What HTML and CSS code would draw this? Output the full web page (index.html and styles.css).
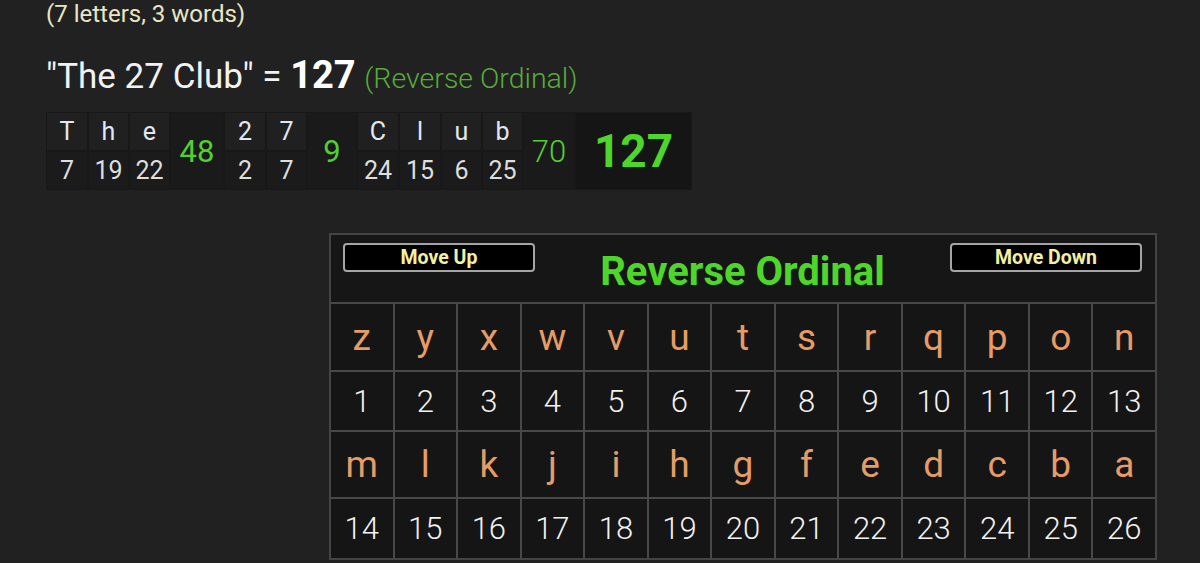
FILE: index.html
```html
<!DOCTYPE html>
<html>
<head>
<meta charset="utf-8">
<link rel="stylesheet" href="styles.css">
</head>
<body>
<div class="page">
  <div class="count">(7 letters, 3 words)</div>
  <div class="result">"The 27 Club" = <b class="sum">127</b> <span class="cipher-name">(Reverse Ordinal)</span></div>
  <div class="breakdown">
    <div class="bl">T</div><div class="bl">h</div><div class="bl">e</div>
    <div class="bw">48</div>
    <div class="bl">2</div><div class="bl">7</div>
    <div class="bw">9</div>
    <div class="bl">C</div><div class="bl">l</div><div class="bl">u</div><div class="bl">b</div>
    <div class="bw light">70</div>
    <div class="bt">127</div>
    <div class="bn">7</div><div class="bn">19</div><div class="bn">22</div>
    <div class="bn">2</div><div class="bn">7</div>
    <div class="bn">24</div><div class="bn">15</div><div class="bn">6</div><div class="bn">25</div>
  </div>
  <div class="panel">
    <div class="panel-head">
      <button class="btn">Move Up</button>
      <div class="panel-title">Reverse Ordinal</div>
      <button class="btn">Move Down</button>
    </div>
    <div class="chart">
      <div class="cl">z</div><div class="cl">y</div><div class="cl">x</div><div class="cl">w</div><div class="cl">v</div><div class="cl">u</div><div class="cl">t</div><div class="cl">s</div><div class="cl">r</div><div class="cl">q</div><div class="cl">p</div><div class="cl">o</div><div class="cl">n</div>
      <div class="cn">1</div><div class="cn">2</div><div class="cn">3</div><div class="cn">4</div><div class="cn">5</div><div class="cn">6</div><div class="cn">7</div><div class="cn">8</div><div class="cn">9</div><div class="cn">10</div><div class="cn">11</div><div class="cn">12</div><div class="cn">13</div>
      <div class="cl">m</div><div class="cl">l</div><div class="cl">k</div><div class="cl">j</div><div class="cl">i</div><div class="cl">h</div><div class="cl">g</div><div class="cl">f</div><div class="cl">e</div><div class="cl">d</div><div class="cl">c</div><div class="cl">b</div><div class="cl">a</div>
      <div class="cn">14</div><div class="cn">15</div><div class="cn">16</div><div class="cn">17</div><div class="cn">18</div><div class="cn">19</div><div class="cn">20</div><div class="cn">21</div><div class="cn">22</div><div class="cn">23</div><div class="cn">24</div><div class="cn">25</div><div class="cn">26</div>
    </div>
  </div>
</div>
</body>
</html>
```
FILE: styles.css
```css
html, body {
  margin: 0;
  padding: 0;
  background: #212121;
  overflow: hidden;
}
.page {
  font-family: Roboto, "Liberation Sans", sans-serif;
  padding-left: 46px;
}
.count {
  font-size: 24px;
  line-height: 28px;
  color: #e8e6c6;
}
.result {
  margin-top: 25px;
  font-size: 35px;
  line-height: 44px;
  color: #f2f2f2;
  white-space: nowrap;
}
.sum {
  font-size: 38px;
  font-weight: 700;
  color: #ffffff;
}
.cipher-name {
  font-size: 28.5px;
  font-weight: 300;
  color: #58ab3c;
}
.breakdown {
  margin-top: 11px;
  display: grid;
  grid-template-columns: 42px 41px 41px 54px 42px 41px 50px 42px 42px 41px 41px 52px 117px;
  grid-template-rows: 39px 39px;
  width: 646px;
  background: #161616;
}
.breakdown > div {
  display: flex;
  align-items: center;
  justify-content: center;
  box-sizing: border-box;
  border: 1px solid #181818;
}
.bl {
  background: #202020;
  color: #e1e8f0;
  font-size: 25px;
}
.bn {
  background: #1b1b1b;
  color: #dedede;
  font-size: 25px;
}
.bw {
  grid-row: span 2;
  background: #1a1a1a;
  color: #52d030;
  font-size: 31px;
}
.bw.light {
  font-weight: 300;
}
.bt {
  grid-row: span 2;
  background: #151515;
  color: #4fd62a;
  font-size: 46px;
  font-weight: 700;
}
.panel {
  margin-top: 43px;
  margin-left: 283px;
  width: 828px;
  box-sizing: border-box;
  border: 2px solid #444444;
  background: #161616;
}
.panel-head {
  height: 67px;
  box-sizing: border-box;
  padding: 8px 13px 0 12px;
  display: flex;
  justify-content: space-between;
  align-items: flex-start;
}
.btn {
  width: 192px;
  height: 29px;
  box-sizing: border-box;
  background: #000;
  border: 2px solid #a5a5a5;
  border-radius: 4px;
  color: #f4f0a2;
  font-family: Roboto, "Liberation Sans", sans-serif;
  font-weight: 700;
  font-size: 19.5px;
  padding: 0;
}
.panel-title {
  margin-top: 5px;
  font-size: 40px;
  font-weight: 700;
  color: #4fd62a;
}
.chart {
  display: grid;
  grid-template-columns: repeat(13, 1fr);
  grid-template-rows: 66px 58px 65px 59px;
  gap: 2px;
  padding-top: 2px;
  background: #484848;
}
.chart > div {
  background: #151515;
  display: flex;
  align-items: center;
  justify-content: center;
}
.cl {
  color: #e59c66;
  font-size: 37px;
}
.cn {
  color: #f2f2f2;
  font-size: 31px;
  font-weight: 300;
}
```
